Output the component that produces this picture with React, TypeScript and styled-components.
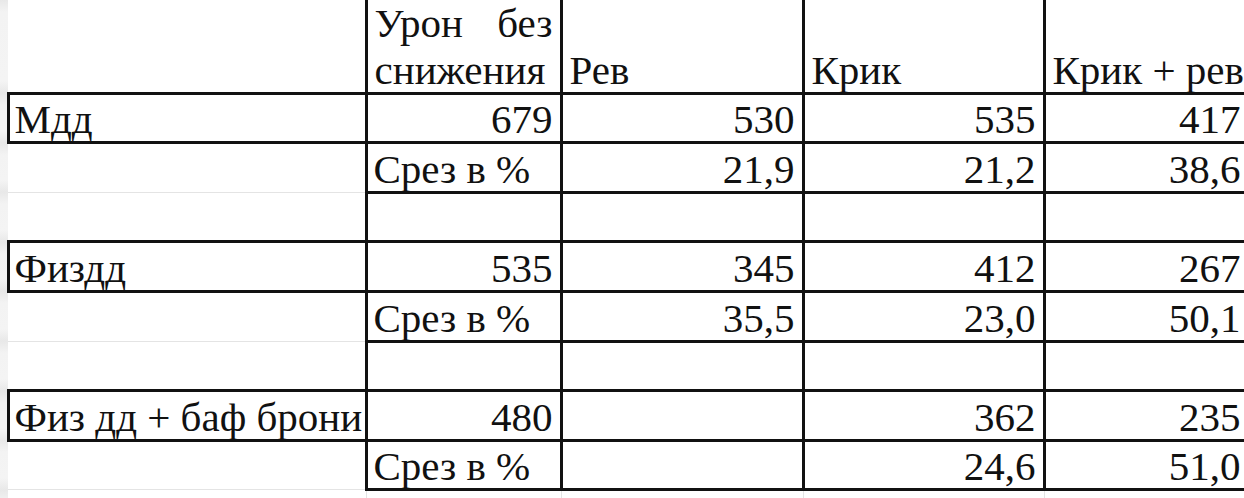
import React from "react";
import styled, { createGlobalStyle } from "styled-components";

type Align = "left" | "right" | "justify";
type Cell = { text?: string; align?: Align };
type Row = { label?: string; cells: Cell[] };

const FONTS = ['"Liberation Serif", serif'];
const SERIF = FONTS[0];
const INK = "#111111";
const GRID = "#e4e4e4";

const GlobalStyles = createGlobalStyle`
  html, body {
    margin: 0;
    background: #ffffff;
    overflow: hidden;
  }
`;

const COLUMN_WIDTHS = [8, 358, 195, 242, 241, 205];

const num = (text: string): Cell => ({ text, align: "right" });
const cut = (...values: string[]): Cell[] => [
  { text: "Срез в %", align: "left" },
  ...values.map((v) => (v ? num(v) : {})),
];
const blank: Cell[] = [{}, {}, {}, {}];

const rows: Row[] = [
  { label: "Мдд", cells: ["679", "530", "535", "417"].map(num) },
  { cells: cut("21,9", "21,2", "38,6") },
  { cells: blank },
  { label: "Физдд", cells: ["535", "345", "412", "267"].map(num) },
  { cells: cut("35,5", "23,0", "50,1") },
  { cells: blank },
  { label: "Физ дд + баф брони", cells: [num("480"), {}, num("362"), num("235")] },
  { cells: cut("", "24,6", "51,0") },
];

const headers = ["Рев", "Крик", "Крик + рев"];

const App = () => (
  <>
    <GlobalStyles />
    <Sheet>
      <colgroup>
        {COLUMN_WIDTHS.map((w, i) => (
          <Column key={i} $width={w} />
        ))}
      </colgroup>
      <tbody>
        <HeaderRow>
          <Gutter />
          <LabelCell $font={SERIF} />
          <HeaderCell $font={SERIF}>
            <HeaderText $font={SERIF} $justify>
              Урон без снижения
            </HeaderText>
          </HeaderCell>
          {headers.map((h) => (
            <HeaderCell key={h} $font={SERIF}>
              <HeaderText $font={SERIF}>{h}</HeaderText>
            </HeaderCell>
          ))}
        </HeaderRow>

        {rows.map((row, i) => (
          <DataRow key={i}>
            <Gutter />
            <LabelCell $font={SERIF} $boxed={!!row.label}>
              {row.label}
            </LabelCell>
            {row.cells.map((cell, j) => (
              <ValueCell key={j} $font={SERIF} $align={cell.align}>
                {cell.text}
              </ValueCell>
            ))}
          </DataRow>
        ))}

        <TailRow>
          <Gutter />
          {[0, 1, 2, 3, 4].map((i) => (
            <TailCell key={i} />
          ))}
        </TailRow>
      </tbody>
    </Sheet>
  </>
);
export default App;

const Sheet = styled.table`
  border-collapse: collapse;
  table-layout: fixed;
  width: ${COLUMN_WIDTHS.reduce((a, b) => a + b, 0)}px;
  margin-top: -1px;
`;

const Column = styled.col<{ $width: number }>`
  width: ${(p) => p.$width}px;
`;

const HeaderRow = styled.tr`
  height: 89px;
`;

const DataRow = styled.tr`
  height: 49.6px;
`;

const TailRow = styled.tr`
  height: 20px;
`;

const Gutter = styled.td`
  padding: 0;
  background: linear-gradient(
    to bottom,
    #e8e8e8 0,
    #f3f3f3 12px,
    #f4f4f4 calc(100% - 12px),
    #e8e8e8 100%
  );
`;

const BaseCell = styled.td<{ $font: string }>`
  padding: 0 7px 0 6px;
  vertical-align: bottom;
  white-space: nowrap;
  font-family: ${(p) => p.$font};
  font-size: 41px;
  line-height: 43px;
  color: ${INK};
`;

const LabelCell = styled(BaseCell)<{ $boxed?: boolean }>`
  padding-left: 5px;
  border: ${(p) => (p.$boxed ? `3px solid ${INK}` : "none")};
  border-bottom: ${(p) => (p.$boxed ? `3px solid ${INK}` : `1px solid ${GRID}`)};
`;

const HeaderCell = styled(BaseCell)`
  border-left: 3px solid ${INK};
  border-right: 3px solid ${INK};
  border-bottom: 3px solid ${INK};
  border-top: 1px solid ${GRID};
  padding-left: 7px;
`;

const HeaderText = styled.div<{ $font: string; $justify?: boolean }>`
  font-family: ${(p) => p.$font};
  font-size: 41px;
  line-height: 47px;
  margin-bottom: -2.4px;
  white-space: ${(p) => (p.$justify ? "normal" : "nowrap")};
  text-align: ${(p) => (p.$justify ? "justify" : "left")};
  text-align-last: left;
`;

const ValueCell = styled(BaseCell)<{ $align?: Align }>`
  border: 3px solid ${INK};
  text-align: ${(p) => (p.$align === "right" ? "right" : "left")};
`;

const TailCell = styled.td`
  padding: 0;
  border-right: 1px solid ${GRID};
`;
